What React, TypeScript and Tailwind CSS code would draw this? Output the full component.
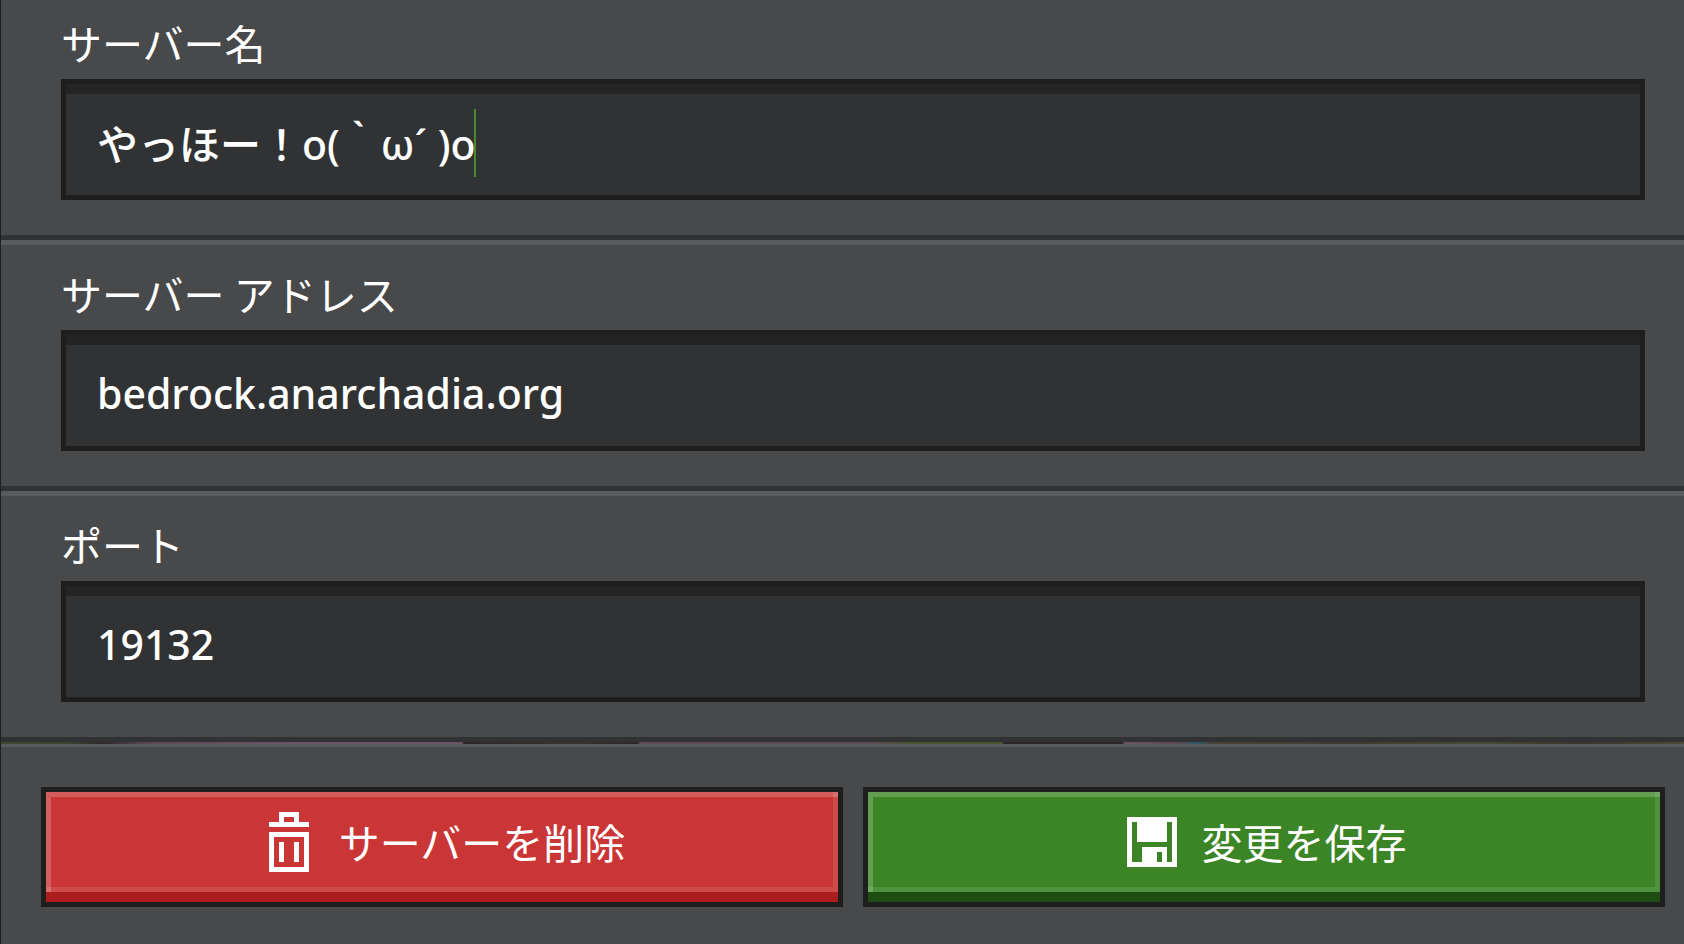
import type { ReactNode } from "react";

const fields = [
  { id: "server-name", label: "サーバー名", value: "やっほー！o(｀ω´ )o", active: true },
  { id: "server-address", label: "サーバー アドレス", value: "bedrock.anarchadia.org" },
  { id: "server-port", label: "ポート", value: "19132" },
];

const TrashIcon = () => (
  <svg viewBox="0 0 8 12" className="h-15 w-10" fill="currentColor" shapeRendering="crispEdges">
    <path
      fillRule="evenodd"
      d="M2 0h4v2h2v1H0V2h2zM3 1v1h2V1zM0 4h8v8H0zM1 5v6h6V5zM2 6h1v4H2zM5 6h1v4H5z"
    />
  </svg>
);

const SaveIcon = () => (
  <svg viewBox="0 0 10 10" className="size-12.5" fill="currentColor" shapeRendering="crispEdges">
    <path
      fillRule="evenodd"
      d="M0 0h10v10H0zM1 1v8h2V6h5v3h1V1H8v4H2V1zM6 7v2h1V7z"
    />
  </svg>
);

type GameButtonProps = {
  icon: ReactNode;
  className: string;
  faceClassName: string;
  children: ReactNode;
};

const GameButton = ({ icon, className, faceClassName, children }: GameButtonProps) => (
  <button
    type="button"
    className={`h-30 flex-1 border-5 border-[#1e1e1f] pb-2.5 text-[41px] leading-15 ${className}`}
  >
    <span
      className={`flex h-full items-center justify-center gap-[18px] shadow-[inset_5px_5px_0_rgba(255,255,255,0.2),inset_-5px_-5px_0_rgba(255,255,255,0.1)] ${faceClassName}`}
    >
      <span className="flex w-16 justify-center">{icon}</span>
      <span className="pr-0.5 pb-0.5">{children}</span>
    </span>
  </button>
);

const App = () => {
  return (
    <div className="flex min-h-screen flex-col overflow-hidden border-l border-[#1e1e1f] bg-[#48494a] font-['Noto_Sans_CJK_JP','Noto_Sans',sans-serif] text-white">
      {/* the list is scrolled a little past its first divider */}
      <form className="-mt-[11px]">
        {fields.map((field) => (
          <div
            key={field.id}
            className="border-t-5 border-b-5 border-t-[#5a5b5c] border-b-[#313233] pt-[18px] pr-[39px] pb-[35px] pl-15"
          >
            <label htmlFor={field.id} className="mb-[7px] block text-[41px] leading-15">
              {field.label}
            </label>
            <div className="relative">
              <input
                id={field.id}
                type="text"
                defaultValue={field.value}
                className="block h-[121px] w-full border-5 border-[#1e1e1f] bg-[#313233] px-[31px] pt-1 font-['Noto_Sans','Noto_Sans_CJK_JP',sans-serif] text-[41px] font-medium caret-[#3c8527] shadow-[inset_0_10px_0_#242425] outline-none"
              />
              {field.active && (
                <span className="absolute top-[30px] left-[413px] h-17 w-0.5 bg-[#458a30]" />
              )}
            </div>
          </div>
        ))}
      </form>

      {/* sliver of the world visible between the panels */}
      <div className="h-0.5 bg-[linear-gradient(90deg,#3f4a2e_0%,#3a4230_4%,#30292a_6%,#5d4b58_9%,#6d5565_18%,#6d5565_27.4%,#2a2628_27.5%,#3a332d_34%,#2a2628_37.8%,#5f4d57_38%,#5a4c52_52%,#4a5230_54%,#4a5230_59.5%,#2a2628_59.6%,#2a2628_66.6%,#6d5565_66.8%,#5a4a50_70%,#2c5a6e_71%,#4a4237_72%,#3f3a30_80%,#474a30_88%,#3a332d_94%,#4c4b33_100%)]" />

      <div className="flex flex-1 items-start gap-5 border-t-3 border-[#5a5b5c] pt-10 pr-[19px] pb-9 pl-10">
        <GameButton icon={<TrashIcon />} className="bg-[#ad1d1d]" faceClassName="bg-[#ca3636]">
          サーバーを削除
        </GameButton>
        <GameButton icon={<SaveIcon />} className="bg-[#1d4d13]" faceClassName="bg-[#3c8527]">
          変更を保存
        </GameButton>
      </div>
    </div>
  );
};

export default App;
